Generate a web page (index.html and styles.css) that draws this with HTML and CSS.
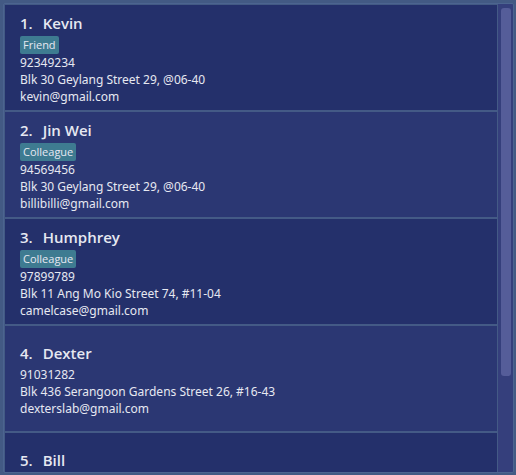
FILE: index.html
```html
<!DOCTYPE html>
<html lang="en">
<head>
<meta charset="utf-8">
<title>Contacts</title>
<link rel="stylesheet" href="styles.css">
</head>
<body>
<main class="panel">
  <ol class="contacts">
    <li class="contact">
      <h2 class="name"><span>1.</span><span>Kevin</span></h2>
      <span class="tag">Friend</span>
      <p>92349234</p>
      <p>Blk 30 Geylang Street 29, @06-40</p>
      <p>kevin@gmail.com</p>
    </li>
    <li class="contact">
      <h2 class="name"><span>2.</span><span>Jin Wei</span></h2>
      <span class="tag">Colleague</span>
      <p>94569456</p>
      <p>Blk 30 Geylang Street 29, @06-40</p>
      <p>billibilli@gmail.com</p>
    </li>
    <li class="contact">
      <h2 class="name"><span>3.</span><span>Humphrey</span></h2>
      <span class="tag">Colleague</span>
      <p>97899789</p>
      <p>Blk 11 Ang Mo Kio Street 74, #11-04</p>
      <p>camelcase@gmail.com</p>
    </li>
    <li class="contact">
      <h2 class="name"><span>4.</span><span>Dexter</span></h2>
      <p>91031282</p>
      <p>Blk 436 Serangoon Gardens Street 26, #16-43</p>
      <p>dexterslab@gmail.com</p>
    </li>
    <li class="contact short">
      <h2 class="name"><span>5.</span><span>Bill</span></h2>
    </li>
  </ol>
  <div class="track"><div class="thumb"></div></div>
</main>
</body>
</html>
```
FILE: styles.css
```css
* {
  box-sizing: border-box;
}

body {
  margin: 0;
  height: 100vh;
  padding: 3px 2px 2px 3px;
  background: #435a84;
  color: #e6e8f1;
  font: 12px/17px "Noto Sans", "Open Sans", sans-serif;
}

.panel {
  display: flex;
  height: 100%;
  overflow: hidden;
  border: 1px solid #4c6490;
  border-radius: 2px;
  background: #435a84;
}

.contacts {
  flex: 1;
  min-width: 0;
  margin: 0;
  padding: 1px 0 0 1px;
  overflow: hidden;
  list-style: none;
}

.contact {
  display: flex;
  flex-direction: column;
  align-items: flex-start;
  justify-content: center;
  min-height: 107px;
  padding: 0 15px;
  border-bottom: 2px solid #445a86;
  background: #24306b;
}

.contact:nth-child(even) {
  background: #2b3773;
}

.contact.short {
  justify-content: flex-start;
  padding-top: 14px;
}

.contact p {
  margin: 0;
}

.name {
  display: flex;
  gap: 10px;
  margin: 0;
  font-family: "Open Sans", "Noto Sans", sans-serif;
  font-size: 15px;
  font-weight: 600;
  line-height: 26px;
}

.tag {
  padding: 0 3px;
  border-radius: 2px;
  background: #3e7b91;
  font-family: "Open Sans", "Noto Sans", sans-serif;
  font-size: 11px;
  line-height: 18px;
}

.track {
  width: 16px;
  padding: 4px 2px 4px 3px;
  border-left: 1px solid #445a86;
  background: #353f7c;
}

.thumb {
  width: 10px;
  height: 80%;
  border-radius: 3px;
  background: #555d99;
}
```
